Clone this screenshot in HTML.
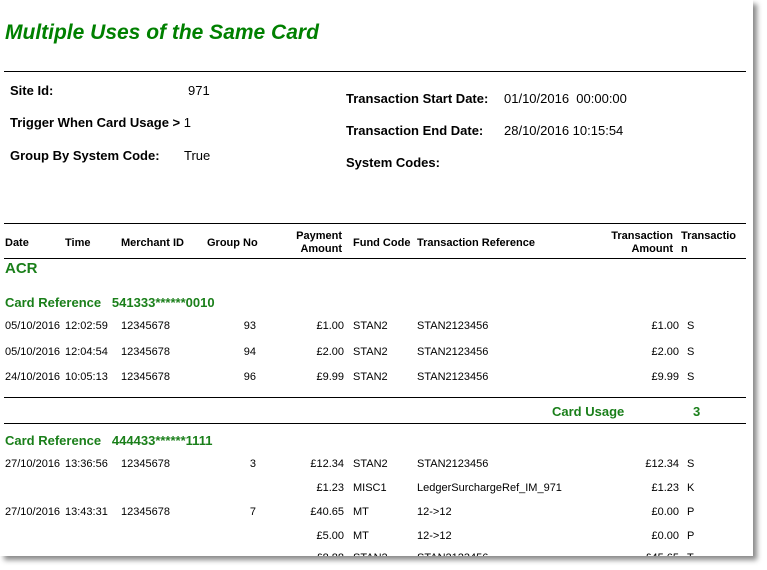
<!DOCTYPE html>
<html><head><meta charset="utf-8"><style>
html,body{margin:0;padding:0;background:#fff;width:767px;height:570px;overflow:hidden}
#pg{position:absolute;left:0;top:0;width:753px;height:556px;background:#fff;box-shadow:4px 4px 5px #8a8a8a;overflow:hidden;font-family:"Liberation Sans",Arial,sans-serif;color:#000}
.t{position:absolute;white-space:nowrap;font-size:11px;line-height:13px}
.r{text-align:right}
.b{font-weight:bold}
.l{font-size:13px;line-height:15px;font-weight:bold}
.v{font-size:13px;line-height:15px}
.g{color:#1a7f1a;font-weight:bold}
.hr{position:absolute;left:4px;width:742px;height:1px;background:#000}
</style></head><body><div id="pg">
<div class="t g" style="left:5px;top:20px;font-size:21px;line-height:25px;font-style:italic;color:#008000">Multiple Uses of the Same Card</div>
<div class="hr" style="top:71px"></div>
<div class="t l" style="left:10px;top:83px">Site Id:</div><div class="t v" style="left:188px;top:83px">971</div>
<div class="t l" style="left:10px;top:115px">Trigger When Card Usage &gt; <span style="font-weight:normal">1</span></div>
<div class="t l" style="left:10px;top:148px">Group By System Code:</div><div class="t v" style="left:184px;top:148px">True</div>
<div class="t l" style="left:346px;top:91px">Transaction Start Date:</div><div class="t v" style="left:504px;top:91px">01/10/2016&nbsp; 00:00:00</div>
<div class="t l" style="left:346px;top:123px">Transaction End Date:</div><div class="t v" style="left:504px;top:123px">28/10/2016 10:15:54</div>
<div class="t l" style="left:346px;top:155px">System Codes:</div>
<div class="hr" style="top:223px"></div>
<div class="t b" style="left:5px;top:237px">Date</div>
<div class="t b" style="left:65px;top:237px">Time</div>
<div class="t b" style="left:121px;top:237px">Merchant ID</div>
<div class="t b" style="left:207px;top:237px">Group No</div>
<div class="t b r" style="right:411px;top:230px">Payment<br>Amount</div>
<div class="t b" style="left:353px;top:237px">Fund Code</div>
<div class="t b" style="left:417px;top:237px">Transaction Reference</div>
<div class="t b r" style="right:80px;top:230px">Transaction<br>Amount</div>
<div class="t b" style="left:681px;top:230px">Transactio<br>n</div>
<div class="hr" style="top:258px"></div>
<div class="t g" style="left:5px;top:260px;font-size:15px;line-height:18px">ACR</div>
<div class="t g" style="left:5px;top:295px;font-size:13px;line-height:16px">Card Reference&nbsp;&nbsp; 541333******0010</div>

<div class="t" style="left:5px;top:320px">05/10/2016</div><div class="t" style="left:65px;top:320px">12:02:59</div><div class="t" style="left:121px;top:320px">12345678</div><div class="t r" style="right:497px;top:320px">93</div><div class="t r" style="right:409px;top:320px">£1.00</div><div class="t" style="left:353px;top:320px">STAN2</div><div class="t" style="left:417px;top:320px">STAN2123456</div><div class="t r" style="right:74px;top:320px">£1.00</div><div class="t" style="left:687px;top:320px">S</div>
<div class="t" style="left:5px;top:346px">05/10/2016</div><div class="t" style="left:65px;top:346px">12:04:54</div><div class="t" style="left:121px;top:346px">12345678</div><div class="t r" style="right:497px;top:346px">94</div><div class="t r" style="right:409px;top:346px">£2.00</div><div class="t" style="left:353px;top:346px">STAN2</div><div class="t" style="left:417px;top:346px">STAN2123456</div><div class="t r" style="right:74px;top:346px">£2.00</div><div class="t" style="left:687px;top:346px">S</div>
<div class="t" style="left:5px;top:371px">24/10/2016</div><div class="t" style="left:65px;top:371px">10:05:13</div><div class="t" style="left:121px;top:371px">12345678</div><div class="t r" style="right:497px;top:371px">96</div><div class="t r" style="right:409px;top:371px">£9.99</div><div class="t" style="left:353px;top:371px">STAN2</div><div class="t" style="left:417px;top:371px">STAN2123456</div><div class="t r" style="right:74px;top:371px">£9.99</div><div class="t" style="left:687px;top:371px">S</div>

<div class="hr" style="top:397px"></div>
<div class="t g" style="left:552px;top:404px;font-size:13px;line-height:16px">Card Usage</div>
<div class="t g" style="left:693px;top:404px;font-size:13px;line-height:16px">3</div>
<div class="hr" style="top:423px"></div>
<div class="t g" style="left:5px;top:433px;font-size:13px;line-height:16px">Card Reference&nbsp;&nbsp; 444433******1111</div>

<div class="t" style="left:5px;top:458px">27/10/2016</div><div class="t" style="left:65px;top:458px">13:36:56</div><div class="t" style="left:121px;top:458px">12345678</div><div class="t r" style="right:497px;top:458px">3</div><div class="t r" style="right:409px;top:458px">£12.34</div><div class="t" style="left:353px;top:458px">STAN2</div><div class="t" style="left:417px;top:458px">STAN2123456</div><div class="t r" style="right:74px;top:458px">£12.34</div><div class="t" style="left:687px;top:458px">S</div>
<div class="t r" style="right:409px;top:482px">£1.23</div><div class="t" style="left:353px;top:482px">MISC1</div><div class="t" style="left:417px;top:482px">LedgerSurchargeRef_IM_971</div><div class="t r" style="right:74px;top:482px">£1.23</div><div class="t" style="left:687px;top:482px">K</div>
<div class="t" style="left:5px;top:506px">27/10/2016</div><div class="t" style="left:65px;top:506px">13:43:31</div><div class="t" style="left:121px;top:506px">12345678</div><div class="t r" style="right:497px;top:506px">7</div><div class="t r" style="right:409px;top:506px">£40.65</div><div class="t" style="left:353px;top:506px">MT</div><div class="t" style="left:417px;top:506px">12-&gt;12</div><div class="t r" style="right:74px;top:506px">£0.00</div><div class="t" style="left:687px;top:506px">P</div>
<div class="t r" style="right:409px;top:530px">£5.00</div><div class="t" style="left:353px;top:530px">MT</div><div class="t" style="left:417px;top:530px">12-&gt;12</div><div class="t r" style="right:74px;top:530px">£0.00</div><div class="t" style="left:687px;top:530px">P</div>
<div class="t r" style="right:409px;top:552px">£8.88</div><div class="t" style="left:353px;top:552px">STAN2</div><div class="t" style="left:417px;top:552px">STAN2123456</div><div class="t r" style="right:74px;top:552px">£45.65</div><div class="t" style="left:687px;top:552px">T</div>
</div></body></html>
